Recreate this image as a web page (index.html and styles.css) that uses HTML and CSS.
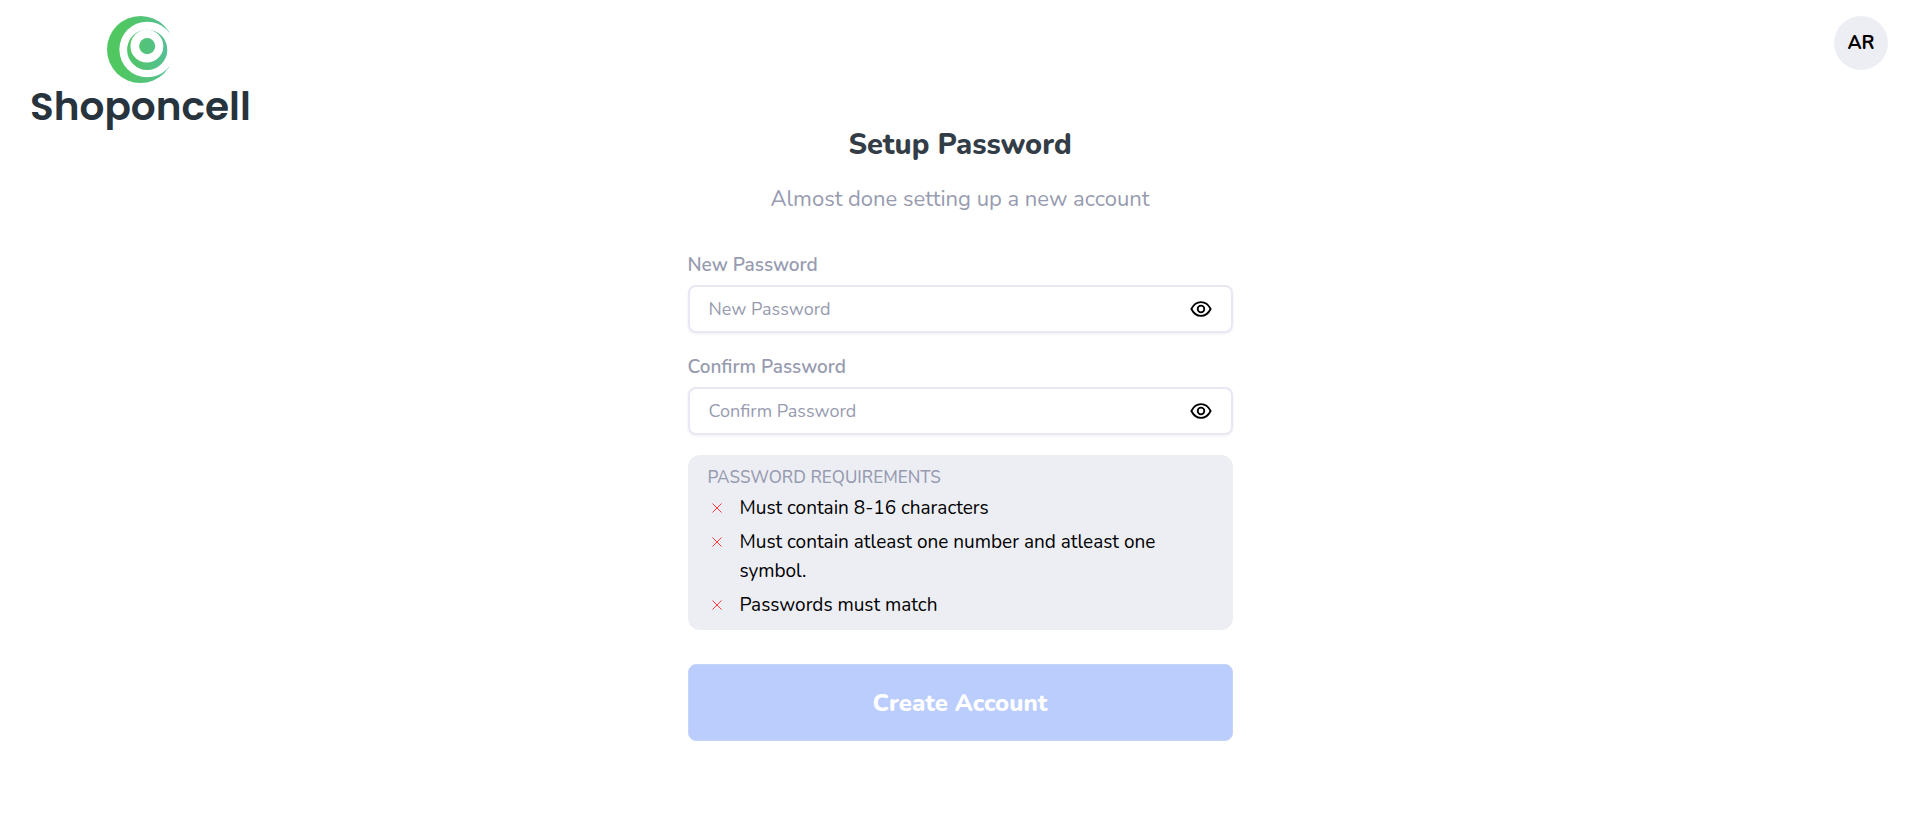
FILE: index.html
```html
<!DOCTYPE html>
<html lang="en">
<head>
    <meta charset="UTF-8">
    <meta name="viewport" content="width=device-width, initial-scale=1.0">
    <title>Setup Password</title>
    <link rel="stylesheet" href="styles.css">
</head>
<body>
    <header class="header">
        <a class="logo" href="#">
            <svg class="logo-mark" viewBox="262 48 200 200" aria-hidden="true">
                <defs>
                    <linearGradient id="green" gradientUnits="userSpaceOnUse" x1="262" y1="0" x2="462" y2="0">
                        <stop offset="0.2" stop-color="#50c761"/>
                        <stop offset="0.5" stop-color="#52c474"/>
                        <stop offset="0.9" stop-color="#55bf94"/>
                    </linearGradient>
                </defs>
                <circle cx="362" cy="148" r="100" fill="url(#green)"/>
                <circle cx="382" cy="148" r="83" fill="#fff"/>
                <circle cx="382" cy="149" r="60" fill="url(#green)"/>
                <circle cx="381" cy="138" r="49" fill="#fff"/>
                <circle cx="382" cy="138" r="24" fill="url(#green)"/>
            </svg>
            <span class="logo-name">Shoponcell</span>
        </a>
        <button class="avatar" type="button">AR</button>
    </header>

    <main class="container">
        <h1>Setup Password</h1>
        <p class="subtitle">Almost done setting up a new account</p>

        <form>
            <div class="field">
                <label for="newPassword">New Password</label>
                <div class="input-box">
                    <input type="password" id="newPassword" placeholder="New Password">
                    <button class="toggle" type="button" aria-label="Show password">
                        <svg viewBox="0 0 24 24"><path d="M1.500 12C4 7 8 4.500 12 4.500S20 7 22.500 12C20 17 16 19.500 12 19.500S4 17 1.500 12z"/><circle cx="12" cy="12" r="3.600"/></svg>
                    </button>
                </div>
            </div>
            <div class="field">
                <label for="confirmPassword">Confirm Password</label>
                <div class="input-box">
                    <input type="password" id="confirmPassword" placeholder="Confirm Password">
                    <button class="toggle" type="button" aria-label="Show password">
                        <svg viewBox="0 0 24 24"><path d="M1.500 12C4 7 8 4.500 12 4.500S20 7 22.500 12C20 17 16 19.500 12 19.500S4 17 1.500 12z"/><circle cx="12" cy="12" r="3.600"/></svg>
                    </button>
                </div>
            </div>

            <div class="requirements">
                <h2>PASSWORD REQUIREMENTS</h2>
                <ul>
                    <li>
                        <svg class="cross" viewBox="0 0 10 10"><path d="M0.500 0.500l9 9M9.500 0.500l-9 9"/></svg>
                        <span>Must contain 8-16 characters</span>
                    </li>
                    <li>
                        <svg class="cross" viewBox="0 0 10 10"><path d="M0.500 0.500l9 9M9.500 0.500l-9 9"/></svg>
                        <span>Must contain atleast one number and atleast one symbol.</span>
                    </li>
                    <li>
                        <svg class="cross" viewBox="0 0 10 10"><path d="M0.500 0.500l9 9M9.500 0.500l-9 9"/></svg>
                        <span>Passwords must match</span>
                    </li>
                </ul>
            </div>

            <button class="submit" type="submit" disabled>Create Account</button>
        </form>
    </main>
</body>
</html>
```

FILE: styles.css
```css
* {
    box-sizing: border-box;
}

body {
    margin: 0;
    font-family: Nunito, Lato, sans-serif;
    font-size: 19px;
    background-color: #fff;
    color: #000;
}

.header {
    display: flex;
    justify-content: space-between;
    align-items: flex-start;
    padding: 16px 32px 0 30px;
}

.logo {
    display: flex;
    flex-direction: column;
    align-items: center;
    color: #27333d;
    text-decoration: none;
}

.logo-mark {
    width: 67px;
    height: 67px;
}

.logo-name {
    font-family: Poppins, Inter, sans-serif;
    font-size: 39px;
    font-weight: 600;
    line-height: 48px;
}

.avatar {
    width: 54px;
    height: 54px;
    padding: 0;
    border: none;
    border-radius: 50%;
    background-color: #edeef4;
    color: #000;
    font-family: inherit;
    font-size: 19px;
    font-weight: 700;
}

.container {
    width: 100%;
    max-width: 545px;
    margin: 0 auto;
}

h1 {
    margin: 0;
    color: #333d47;
    font-size: 29px;
    font-weight: 800;
    line-height: 28px;
    text-align: center;
}

.subtitle {
    margin: 24px 0 36px;
    color: #979bb0;
    font-size: 22px;
    line-height: 32px;
    text-align: center;
}

.field {
    margin-bottom: 20px;
}

.field label {
    display: block;
    margin-bottom: 6px;
    color: #979bb0;
    font-weight: 600;
    line-height: 28px;
}

.input-box {
    display: flex;
    align-items: center;
    height: 48px;
    padding: 0 19px;
    border: 2px solid #e8e7f3;
    border-radius: 8px;
    box-shadow: 0 1px 3px rgba(60, 60, 100, 0.08);
}

.input-box input {
    flex: 1;
    min-width: 0;
    padding: 0;
    border: none;
    outline: none;
    background: none;
    font-family: inherit;
    font-size: 18px;
}

.input-box input::placeholder {
    color: #979bb0;
}

.toggle {
    display: flex;
    padding: 0;
    border: none;
    background: none;
}

.toggle svg {
    width: 22px;
    height: 22px;
    fill: none;
    stroke: #000;
    stroke-width: 2;
}

.requirements {
    padding: 9px 20px 7px;
    border-radius: 12px;
    background-color: #edeef4;
}

.requirements h2 {
    margin: 0;
    color: #979bb0;
    font-size: 17px;
    font-weight: 500;
    line-height: 28px;
}

.requirements ul {
    margin: 0;
    padding: 0;
    list-style: none;
}

.requirements li {
    display: flex;
    gap: 18px;
    padding: 2px 0 3px 4px;
    line-height: 29px;
}

.cross {
    flex: none;
    width: 10px;
    height: 10px;
    margin-top: 9px;
    stroke: #ff3b40;
}

.submit {
    width: 100%;
    height: 77px;
    margin-top: 34px;
    border: 1px solid #c6d4fc;
    border-radius: 8px;
    background-color: #bbcdfc;
    color: #fff;
    font-family: inherit;
    font-size: 24px;
    font-weight: 800;
}
```
